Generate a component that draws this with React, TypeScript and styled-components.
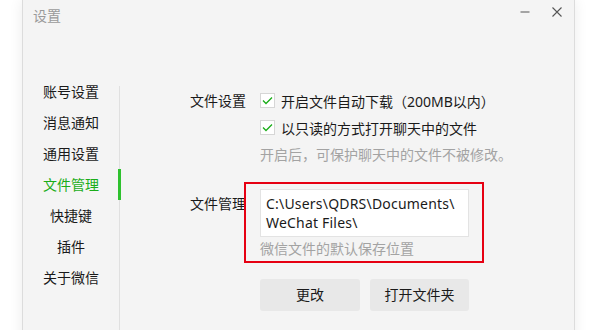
import * as React from "react";
import styled, { createGlobalStyle } from "styled-components";

const GlobalStyle = createGlobalStyle`
  html, body {
    margin: 0;
    padding: 0;
    background: #ffffff;
    overflow: hidden;
  }
  body {
    font-family: "Noto Sans", "Noto Sans CJK SC", sans-serif;
    font-size: 14px;
    color: #1a1a1a;
  }
`;

const Page = styled.div`
  width: 600px;
  height: 330px;
  overflow: hidden;
  display: flex;
`;

const Window = styled.div`
  margin-left: 23px;
  width: 551px;
  height: 360px;
  background: #f4f4f4;
  box-shadow: 0 0 0 1px #dcdcdc, 0 0 14px rgba(0, 0, 0, 0.09);
  display: flex;
  flex-direction: column;
`;

const TitleBar = styled.div`
  height: 32px;
  display: flex;
  align-items: center;
  padding-left: 10px;
`;

const Title = styled.div`
  flex: 1;
  color: #9a9a9a;
  font-size: 14px;
  line-height: 32px;
`;

const WinButton = styled.div<{ $right?: number }>`
  width: 32px;
  height: 24px;
  display: flex;
  align-items: center;
  justify-content: center;
  margin-top: -8px;
  margin-right: ${(p) => p.$right || 0}px;
`;

const Body = styled.div`
  display: flex;
  flex: 1;
  padding-top: 44px;
`;

const Sidebar = styled.div`
  width: 96px;
  display: flex;
  flex-direction: column;
`;

const NavItem = styled.div<{ $active?: boolean }>`
  position: relative;
  height: 31px;
  line-height: 31px;
  text-align: center;
  font-size: 14px;
  color: ${(p) => (p.$active ? "#1aad19" : "#1a1a1a")};

  &::after {
    content: "";
    display: ${(p) => (p.$active ? "block" : "none")};
    position: absolute;
    top: 0;
    right: -2px;
    width: 3px;
    height: 100%;
    background: #2ec12e;
  }
`;

const Divider = styled.div`
  width: 1px;
  margin-top: 10px;
  background: #e0e0e0;
`;

const Content = styled.div`
  flex: 1;
  padding: 11px 0 0 70px;
  display: flex;
  flex-direction: column;
`;

const Section = styled.div<{ $gap?: number }>`
  display: flex;
  margin-top: ${(p) => p.$gap || 0}px;
`;

const Label = styled.div<{ $pad?: number }>`
  width: 70px;
  flex-shrink: 0;
  line-height: ${(p) => (p.$pad ? "19px" : "27px")};
  padding-top: ${(p) => p.$pad || 0}px;
  white-space: nowrap;
`;

const Column = styled.div`
  display: flex;
  flex-direction: column;
`;

const CheckRow = styled.div`
  display: flex;
  align-items: center;
  height: 27px;
  gap: 6px;
  white-space: nowrap;
`;

const Box = styled.div`
  width: 15px;
  height: 15px;
  box-sizing: border-box;
  border: 1px solid #d6d6d6;
  background: #ffffff;
  display: flex;
  align-items: center;
  justify-content: center;
`;

const Hint = styled.div<{ $lh: number }>`
  color: #a3a3a3;
  line-height: ${(p) => p.$lh}px;
  white-space: nowrap;
`;

const PathGroup = styled.div`
  position: relative;
  display: flex;
  flex-direction: column;

  &::after {
    content: "";
    position: absolute;
    top: -7px;
    left: -16px;
    right: -15px;
    bottom: -2px;
    border: 2px solid #e60012;
    pointer-events: none;
  }
`;

const PathBox = styled.div`
  width: 209px;
  box-sizing: border-box;
  background: #ffffff;
  border: 1px solid #e3e3e3;
  padding: 4px 6px 4px 5px;
  line-height: 19px;
  font-size: 14px;
  letter-spacing: 0.2px;
  color: #1a1a1a;
  white-space: nowrap;
`;

const ButtonRow = styled.div`
  display: flex;
  gap: 10px;
  margin-top: 18px;
`;

const Button = styled.div<{ $w: number }>`
  width: ${(p) => p.$w}px;
  height: 32px;
  line-height: 32px;
  text-align: center;
  background: #e8e8e8;
  border-radius: 3px;
  font-size: 14px;
  color: #1a1a1a;
`;

const Check = () => (
  <svg width="11" height="9" viewBox="0 0 11 9">
    <polyline points="1,4.5 4,7.5 10,1.5" fill="none" stroke="#1aad19" strokeWidth="1.3" />
  </svg>
);

const navItems = ["账号设置", "消息通知", "通用设置", "文件管理", "快捷键", "插件", "关于微信"];

export default function App() {
  return (
    <Page>
      <GlobalStyle />
      <Window>
        <TitleBar>
          <Title>设置</Title>
          <WinButton>
            <svg width="10" height="2" viewBox="0 0 10 2">
              <line x1="0.5" y1="1" x2="9.5" y2="1" stroke="#555" strokeWidth="1" />
            </svg>
          </WinButton>
          <WinButton $right={1}>
            <svg width="10" height="10" viewBox="0 0 10 10">
              <path d="M0.5 0.5 L9.5 9.5 M9.5 0.5 L0.5 9.5" stroke="#555" strokeWidth="1.1" />
            </svg>
          </WinButton>
        </TitleBar>
        <Body>
          <Sidebar>
            {navItems.map((n) => (
              <NavItem key={n} $active={n === "文件管理"}>
                {n}
              </NavItem>
            ))}
          </Sidebar>
          <Divider />
          <Content>
            <Section>
              <Label>文件设置</Label>
              <Column>
                <CheckRow>
                  <Box>
                    <Check />
                  </Box>
                  <span>开启文件自动下载（200MB以内）</span>
                </CheckRow>
                <CheckRow>
                  <Box>
                    <Check />
                  </Box>
                  <span>以只读的方式打开聊天中的文件</span>
                </CheckRow>
                <Hint $lh={28}>开启后，可保护聊天中的文件不被修改。</Hint>
              </Column>
            </Section>
            <Section $gap={20}>
              <Label $pad={5}>文件管理</Label>
              <Column>
                <PathGroup>
                  <PathBox>
                    C:\Users\QDRS\Documents\
                    <br />
                    WeChat Files\
                  </PathBox>
                  <Hint $lh={24}>微信文件的默认保存位置</Hint>
                </PathGroup>
                <ButtonRow>
                  <Button $w={100}>更改</Button>
                  <Button $w={99}>打开文件夹</Button>
                </ButtonRow>
              </Column>
            </Section>
          </Content>
        </Body>
      </Window>
    </Page>
  );
}
